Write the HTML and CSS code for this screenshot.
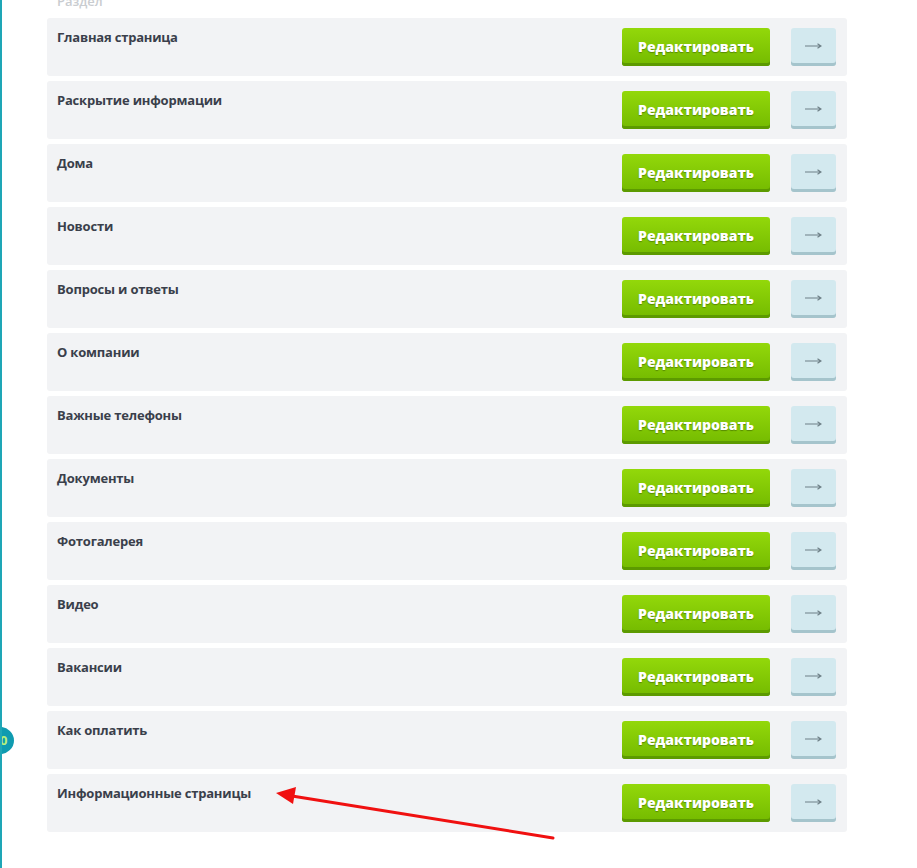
FILE: index.html
```html
<!DOCTYPE html>
<html>
<head>
    <meta charset="UTF-8">
    <title>Разделы</title>
    <link rel="stylesheet" href="styles.css">
</head>
<body>
<div class="page">
    <span class="side-badge">10</span>
    <div class="sections">
        <div class="sections-head">Раздел</div>
        <div class="section-row">
            <span class="section-name">Главная страница</span>
            <a href="#" class="btn-edit">Редактировать</a>
            <a href="#" class="btn-go"><svg width="17" height="8" viewBox="0 0 17 8"><path d="M0 4H16M12.5 1.8L16 4L12.5 6.2"/></svg></a>
        </div>
        <div class="section-row">
            <span class="section-name">Раскрытие информации</span>
            <a href="#" class="btn-edit">Редактировать</a>
            <a href="#" class="btn-go"><svg width="17" height="8" viewBox="0 0 17 8"><path d="M0 4H16M12.5 1.8L16 4L12.5 6.2"/></svg></a>
        </div>
        <div class="section-row">
            <span class="section-name">Дома</span>
            <a href="#" class="btn-edit">Редактировать</a>
            <a href="#" class="btn-go"><svg width="17" height="8" viewBox="0 0 17 8"><path d="M0 4H16M12.5 1.8L16 4L12.5 6.2"/></svg></a>
        </div>
        <div class="section-row">
            <span class="section-name">Новости</span>
            <a href="#" class="btn-edit">Редактировать</a>
            <a href="#" class="btn-go"><svg width="17" height="8" viewBox="0 0 17 8"><path d="M0 4H16M12.5 1.8L16 4L12.5 6.2"/></svg></a>
        </div>
        <div class="section-row">
            <span class="section-name">Вопросы и ответы</span>
            <a href="#" class="btn-edit">Редактировать</a>
            <a href="#" class="btn-go"><svg width="17" height="8" viewBox="0 0 17 8"><path d="M0 4H16M12.5 1.8L16 4L12.5 6.2"/></svg></a>
        </div>
        <div class="section-row">
            <span class="section-name">О компании</span>
            <a href="#" class="btn-edit">Редактировать</a>
            <a href="#" class="btn-go"><svg width="17" height="8" viewBox="0 0 17 8"><path d="M0 4H16M12.5 1.8L16 4L12.5 6.2"/></svg></a>
        </div>
        <div class="section-row">
            <span class="section-name">Важные телефоны</span>
            <a href="#" class="btn-edit">Редактировать</a>
            <a href="#" class="btn-go"><svg width="17" height="8" viewBox="0 0 17 8"><path d="M0 4H16M12.5 1.8L16 4L12.5 6.2"/></svg></a>
        </div>
        <div class="section-row">
            <span class="section-name">Документы</span>
            <a href="#" class="btn-edit">Редактировать</a>
            <a href="#" class="btn-go"><svg width="17" height="8" viewBox="0 0 17 8"><path d="M0 4H16M12.5 1.8L16 4L12.5 6.2"/></svg></a>
        </div>
        <div class="section-row">
            <span class="section-name">Фотогалерея</span>
            <a href="#" class="btn-edit">Редактировать</a>
            <a href="#" class="btn-go"><svg width="17" height="8" viewBox="0 0 17 8"><path d="M0 4H16M12.5 1.8L16 4L12.5 6.2"/></svg></a>
        </div>
        <div class="section-row">
            <span class="section-name">Видео</span>
            <a href="#" class="btn-edit">Редактировать</a>
            <a href="#" class="btn-go"><svg width="17" height="8" viewBox="0 0 17 8"><path d="M0 4H16M12.5 1.8L16 4L12.5 6.2"/></svg></a>
        </div>
        <div class="section-row">
            <span class="section-name">Вакансии</span>
            <a href="#" class="btn-edit">Редактировать</a>
            <a href="#" class="btn-go"><svg width="17" height="8" viewBox="0 0 17 8"><path d="M0 4H16M12.5 1.8L16 4L12.5 6.2"/></svg></a>
        </div>
        <div class="section-row">
            <span class="section-name">Как оплатить</span>
            <a href="#" class="btn-edit">Редактировать</a>
            <a href="#" class="btn-go"><svg width="17" height="8" viewBox="0 0 17 8"><path d="M0 4H16M12.5 1.8L16 4L12.5 6.2"/></svg></a>
        </div>
        <div class="section-row">
            <span class="section-name">Информационные страницы</span>
            <a href="#" class="btn-edit">Редактировать</a>
            <a href="#" class="btn-go"><svg width="17" height="8" viewBox="0 0 17 8"><path d="M0 4H16M12.5 1.8L16 4L12.5 6.2"/></svg></a>
        </div>
    </div>
    <svg class="annotation" width="917" height="868" viewBox="0 0 917 868">
        <line x1="553" y1="838" x2="292" y2="796" stroke="#f01010" stroke-width="3" stroke-linecap="round"/>
        <polygon points="276,793 296,787 293,804" fill="#f01010"/>
    </svg>
</div>
</body>
</html>
```

FILE: styles.css
```css
body {
    margin: 0;
    background: #fff;
    font-family: "Open Sans", "Liberation Sans", sans-serif;
}

.page {
    position: relative;
    min-height: 868px;
    border-left: 2px solid #1ea6b6;
    box-sizing: border-box;
    overflow: hidden;
}

.side-badge {
    position: absolute;
    left: -16px;
    top: 727px;
    width: 28px;
    height: 27px;
    border-radius: 50%;
    background: #0f9bb0;
    color: #b8f27a;
    font-size: 13px;
    font-weight: 700;
    line-height: 27px;
    text-align: center;
}

.sections {
    width: 800px;
    margin-left: 45px;
    display: flex;
    flex-direction: column;
    gap: 5px;
}

.sections-head {
    margin-top: -8px;
    margin-bottom: 3px;
    padding-left: 10px;
    font-size: 13px;
    font-weight: 600;
    line-height: 18px;
    color: #c9ccd0;
}

.section-row {
    display: flex;
    align-items: flex-start;
    height: 58px;
    box-sizing: border-box;
    padding: 10px 11px 10px 10px;
    background: #f2f3f5;
    border-radius: 3px;
}

.section-name {
    flex: 1;
    font-size: 13px;
    font-weight: 700;
    line-height: 18px;
    letter-spacing: -0.2px;
    color: #3a3f4b;
}

.btn-edit {
    width: 148px;
    height: 38px;
    box-sizing: border-box;
    border-radius: 3px;
    background: linear-gradient(#93d80a, #74ba00);
    box-shadow: inset 0 -3px 0 #5c9a00;
    color: #fff;
    font-size: 14px;
    font-weight: 800;
    line-height: 37px;
    text-align: center;
    text-decoration: none;
    text-shadow: 0 1px 1px rgba(60, 100, 0, 0.6);
}

.btn-go {
    display: flex;
    align-items: center;
    justify-content: center;
    width: 45px;
    height: 38px;
    margin-left: 21px;
    padding-bottom: 2px;
    box-sizing: border-box;
    border-radius: 3px;
    background: #d3e9ef;
    box-shadow: inset 0 -3px 0 #a5c4cc;
}

.btn-go path {
    fill: none;
    stroke: #6f8088;
    stroke-width: 1.2;
}

.annotation {
    position: absolute;
    left: -2px;
    top: 0;
    pointer-events: none;
}
```
